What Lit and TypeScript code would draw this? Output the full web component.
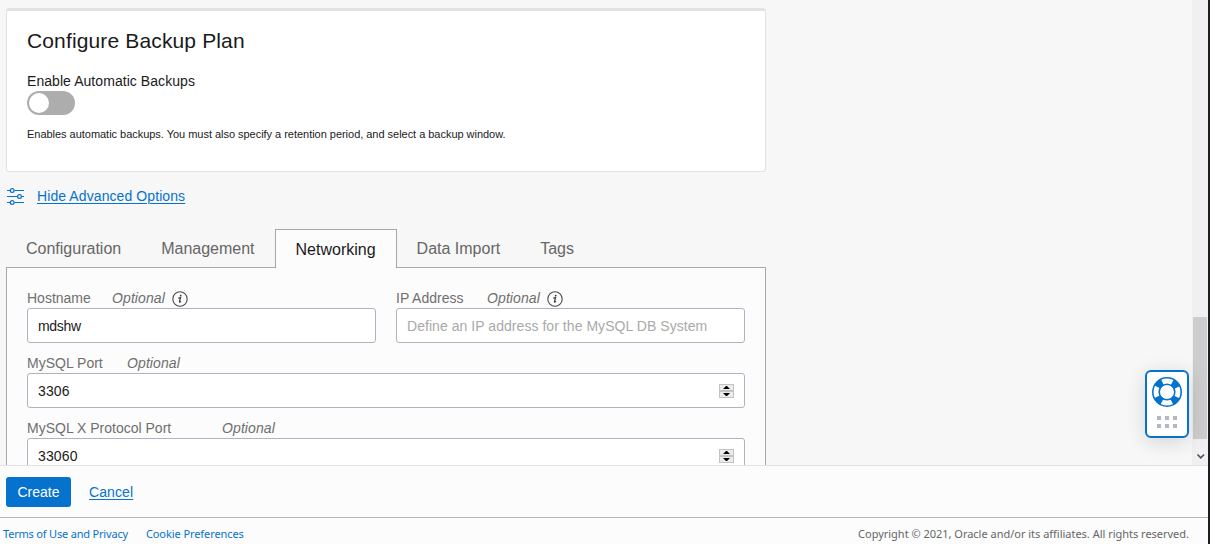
import { LitElement, html, css, svg } from "lit";
import { customElement, property } from "lit/decorators.js";

const infoIcon = html`<svg class="info" width="16" height="16" viewBox="0 0 16 16">
  <circle cx="8" cy="8" r="7.2" fill="none" stroke="#4a4a4a" stroke-width="1.1" />
  <path d="M6.300 7.100L8.500 6.700 7.500 10.700c-.1.600.5.500 1.500-.3" fill="none" stroke="#333" stroke-width="1.200" />
  <circle cx="8.700" cy="4.700" r=".9" fill="#333" />
</svg>`;

const spinner = html`<svg class="spinner" width="15" height="14" viewBox="0 0 15 14">
  <rect x=".5" y=".5" width="14" height="6" fill="#ececec" stroke="#c3c3c3" />
  <rect x=".5" y="7.5" width="14" height="6" fill="#ececec" stroke="#c3c3c3" />
  <path d="M4 5L7 2h1l3 3zM4 9l3 3h1l3-3z" fill="#000" />
</svg>`;

@customElement("form-field")
export class FormField extends LitElement {
  @property() label = "";
  @property() value = "";
  @property() placeholder = "";
  @property({ type: Number }) labelWidth = 85;
  @property({ type: Boolean }) info = false;
  @property({ type: Boolean }) numeric = false;

  static styles = css`
    :host { display: block; flex: 1; min-width: 0; }
    .caption { display: flex; height: 20px; line-height: 20px; color: #6f6f6f; white-space: nowrap; }
    .caption em { width: 60px; letter-spacing: .1px; }
    .info { margin-top: 3px; }
    .box {
      box-sizing: border-box; height: 35px; border: 1px solid #aeb4bf; border-radius: 3px;
      background: #fff; padding: 0 10px; display: flex; align-items: center;
      justify-content: space-between; color: #1a1a1a; white-space: nowrap;
    }
    .text { letter-spacing: -.3px; }
    .number { letter-spacing: .15px; }
    .hint { color: #a9a9a9; letter-spacing: .05px; }
    .spinner { display: block; }
  `;

  render() {
    const kind = !this.value ? "hint" : this.numeric ? "number" : "text";
    return html`
      <div class="caption">
        <span style="width:${this.labelWidth}px">${this.label}</span>
        <em>Optional</em>${this.info ? infoIcon : ""}
      </div>
      <div class="box">
        <span class=${kind}>${this.value || this.placeholder}</span>
        ${this.numeric ? spinner : ""}
      </div>
    `;
  }
}

@customElement("app-root")
export class AppRoot extends LitElement {
  static styles = css`
    :host {
      display: flex; box-sizing: border-box; width: 1210px; height: 544px; overflow: hidden;
      border-right: 2px solid #1d1d20; background: #fcfcfc; position: relative;
      font: 14px "Liberation Sans", Arial, sans-serif; color: #1a1a1a; flex-direction: column;
    }
    a { color: #0572ce; text-decoration: underline; text-underline-offset: 2px; text-decoration-thickness: 1px; }
    .view { height: 465px; display: flex; background: #f7f7f7; overflow: hidden; }
    .content { flex: 1; padding: 8px 0 0 6px; }
    .card {
      box-sizing: border-box; width: 760px; height: 164px; background: #fff;
      border: 1px solid #e1e1e6; border-top-width: 3px; border-radius: 3px; padding: 0 20px;
    }
    h2 { margin: 0; padding-top: 18px; font-size: 21px; font-weight: 400; line-height: 24px; letter-spacing: .14px; }
    .toggle-label { margin-top: 20px; line-height: 16px; letter-spacing: .06px; }
    .toggle { box-sizing: border-box; margin-top: 2px; width: 48px; height: 24px; border-radius: 12px; background: #adadad; padding: 2px; }
    .knob { width: 20px; height: 20px; border-radius: 50%; background: #fff; }
    .help { margin-top: 13px; font-size: 11px; line-height: 13px; letter-spacing: -.028px; }
    .advanced { display: flex; gap: 12px; height: 18px; margin-top: 15px; line-height: 18px; letter-spacing: .09px; }
    .advanced svg { display: block; margin: 1px 0 0 1px; }
    .tabs { display: flex; height: 39px; margin-top: 24px; font-size: 16px; line-height: 38px; color: #666; position: relative; }
    .tab { box-sizing: border-box; padding: 0 19px; white-space: nowrap; border: 1px solid transparent; border-bottom: 0; }
    .tab.active { background: #fcfcfc; border-color: #a8a8a8; color: #1a1a1a; line-height: 40px; padding: 0 20px; }
    .panel {
      box-sizing: border-box; width: 760px; height: 300px; margin-top: -1px; background: #fcfcfc;
      border: 1px solid #a8a8a8; padding: 20px; display: flex; flex-direction: column; gap: 10px;
    }
    .panel form-field { flex: none; }
    .pair { display: flex; gap: 20px; }
    .pair form-field { flex: 1; }
    .scroll { width: 14px; padding: 0 1px; background: #f0f0f0; display: flex; flex-direction: column; justify-content: flex-end; }
    .thumb { height: 122px; background: #cdcdcd; }
    .scroll svg { display: block; height: 26px; }
    .actions {
      box-sizing: border-box; height: 52px; border-top: 1px solid #e2e2e4; padding: 11px 6px 0;
      display: flex; gap: 18px; line-height: 30px;
    }
    .actions a { letter-spacing: .1px; }
    .create { width: 65px; height: 30px; border-radius: 3px; background: #0572ce; color: #fff; text-align: center; }
    footer {
      box-sizing: border-box; height: 27px; border-top: 1px solid #b4b6c0; padding: 0 19px 0 3px;
      display: flex; font: 11px/32px "Noto Sans", sans-serif; color: #666; white-space: nowrap;
    }
    footer a { text-decoration: none; margin-right: 18px; letter-spacing: -.08px; }
    footer a:first-child { letter-spacing: -.19px; }
    .copy { margin-left: auto; letter-spacing: -.015px; }
    .support {
      position: absolute; left: 1145px; top: 370px; box-sizing: border-box; width: 44px; height: 68px;
      border: 2px solid #0572ce; border-radius: 6px; background: #fff; box-shadow: 0 4px 20px rgba(0, 0, 0, .14);
    }
    .support svg { display: block; }
  `;

  render() {
    return html`
      <div class="view">
        <div class="content">
          <section class="card">
            <h2>Configure Backup Plan</h2>
            <div class="toggle-label">Enable Automatic Backups</div>
            <div class="toggle"><div class="knob"></div></div>
            <div class="help">Enables automatic backups. You must also specify a retention period, and select a backup window.</div>
          </section>
          <div class="advanced">
            <svg width="18" height="18" viewBox="0 0 18 18" fill="none" stroke="#0572ce" stroke-width="1.2">
              <path d="M0 2.500h3M7.500 2.500H17M0 8.500h10M15 8.500h2M0 14.500h3M7.500 14.500H17" />
              <circle cx="5.200" cy="2.500" r="1.900" /><circle cx="12.500" cy="8.500" r="1.900" /><circle cx="5.200" cy="14.500" r="1.900" />
            </svg>
            <a>Hide Advanced Options</a>
          </div>
          <nav class="tabs">
            ${["Configuration", "Management", "Networking", "Data Import", "Tags"].map(
              (t) => html`<div class="tab ${t === "Networking" ? "active" : ""}">${t}</div>`
            )}
          </nav>
          <section class="panel">
            <div class="pair">
              <form-field label="Hostname" value="mdshw" info></form-field>
              <form-field label="IP Address" .labelWidth=${91} placeholder="Define an IP address for the MySQL DB System" info></form-field>
            </div>
            <form-field label="MySQL Port" value="3306" .labelWidth=${100} numeric></form-field>
            <form-field label="MySQL X Protocol Port" value="33060" .labelWidth=${195} numeric></form-field>
          </section>
        </div>
        <div class="scroll">
          <div class="thumb"></div>
          <svg width="14" height="26" viewBox="0 0 14 26"><path d="M4.500 15.500l3.300 3.300 3.300-3.300" fill="none" stroke="#505050" stroke-width="1.600" /></svg>
        </div>
      </div>
      <div class="actions"><div class="create">Create</div><a>Cancel</a></div>
      <footer>
        <a>Terms of Use and Privacy</a><a>Cookie Preferences</a>
        <span class="copy">Copyright © 2021, Oracle and/or its affiliates. All rights reserved.</span>
      </footer>
      <div class="support">
        <svg width="40" height="64" viewBox="0 0 40 64">
          <g fill="none" stroke="#0572ce">
            <circle cx="20" cy="20" r="11" stroke-width="7" stroke-dasharray="7 10.279" stroke-dashoffset="-5.140" />
            <circle cx="20" cy="20" r="14.200" stroke-width="1.600" />
            <circle cx="20" cy="20" r="7.800" stroke-width="1.600" />
          </g>
          ${[46, 54].map((y) => [12, 20, 28].map((x) => svg`<rect x=${x - 2} y=${y - 2} width="4" height="4" fill="#b4b7c1" />`))}
        </svg>
      </div>
    `;
  }
}
